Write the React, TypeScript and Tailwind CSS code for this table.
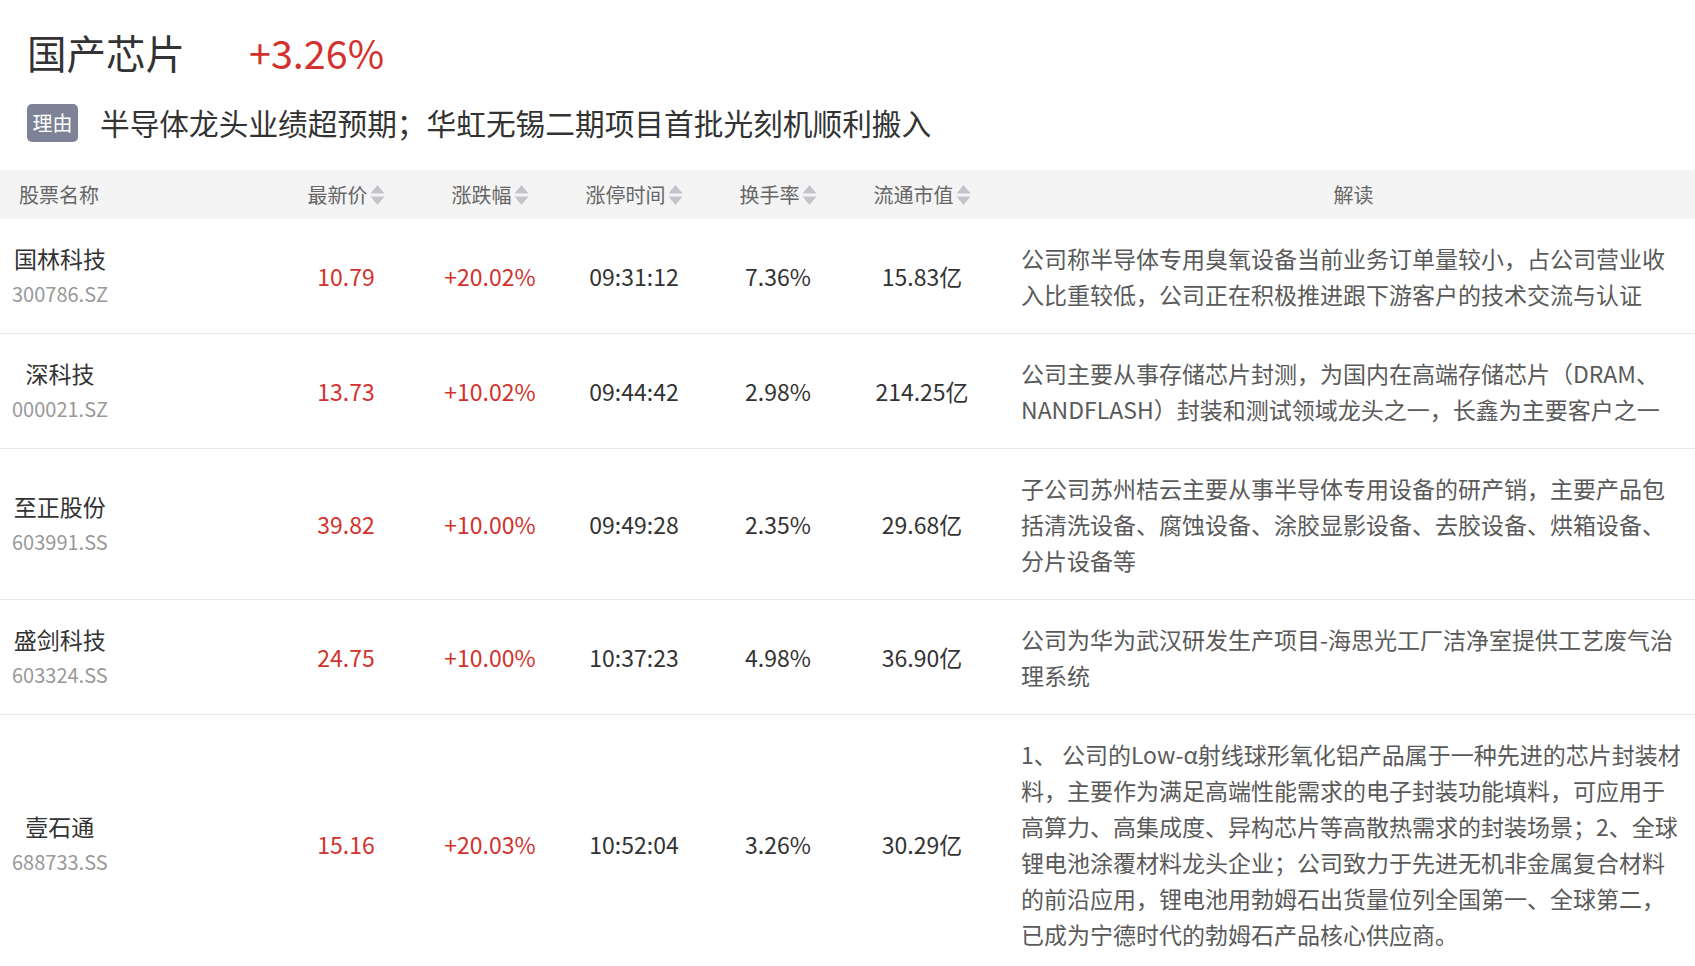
import React from "react";

type Stock = {
  name: string;
  code: string;
  price: string;
  change: string;
  time: string;
  turnover: string;
  cap: string;
  note: string;
};

const stocks: Stock[] = [
  {
    name: "国林科技",
    code: "300786.SZ",
    price: "10.79",
    change: "+20.02%",
    time: "09:31:12",
    turnover: "7.36%",
    cap: "15.83亿",
    note: "公司称半导体专用臭氧设备当前业务订单量较小，占公司营业收入比重较低，公司正在积极推进跟下游客户的技术交流与认证",
  },
  {
    name: "深科技",
    code: "000021.SZ",
    price: "13.73",
    change: "+10.02%",
    time: "09:44:42",
    turnover: "2.98%",
    cap: "214.25亿",
    note: "公司主要从事存储芯片封测，为国内在高端存储芯片（DRAM、NANDFLASH）封装和测试领域龙头之一，长鑫为主要客户之一",
  },
  {
    name: "至正股份",
    code: "603991.SS",
    price: "39.82",
    change: "+10.00%",
    time: "09:49:28",
    turnover: "2.35%",
    cap: "29.68亿",
    note: "子公司苏州桔云主要从事半导体专用设备的研产销，主要产品包括清洗设备、腐蚀设备、涂胶显影设备、去胶设备、烘箱设备、分片设备等",
  },
  {
    name: "盛剑科技",
    code: "603324.SS",
    price: "24.75",
    change: "+10.00%",
    time: "10:37:23",
    turnover: "4.98%",
    cap: "36.90亿",
    note: "公司为华为武汉研发生产项目-海思光工厂洁净室提供工艺废气治理系统",
  },
  {
    name: "壹石通",
    code: "688733.SS",
    price: "15.16",
    change: "+20.03%",
    time: "10:52:04",
    turnover: "3.26%",
    cap: "30.29亿",
    note: "1、 公司的Low-α射线球形氧化铝产品属于一种先进的芯片封装材料，主要作为满足高端性能需求的电子封装功能填料，可应用于高算力、高集成度、异构芯片等高散热需求的封装场景；2、全球锂电池涂覆材料龙头企业；公司致力于先进无机非金属复合材料的前沿应用，锂电池用勃姆石出货量位列全国第一、全球第二，已成为宁德时代的勃姆石产品核心供应商。",
  },
];

function SortArrows() {
  return (
    <svg width="15" height="22" viewBox="0 0 15 22" className="ml-[2px] shrink-0">
      <path d="M7.5 1 L14.5 9.5 L0.5 9.5 Z" fill="#c2c5cc" />
      <path d="M0.5 12.5 L14.5 12.5 L7.5 21 Z" fill="#c2c5cc" />
    </svg>
  );
}

function SortHeader({ label }: { label: string }) {
  return (
    <th className="font-normal">
      <span className="inline-flex items-center justify-center">
        {label}
        <SortArrows />
      </span>
    </th>
  );
}

export default function App() {
  return (
    <div
      className="min-h-screen w-full bg-white text-[#333]"
      style={{ fontFamily: '"Noto Sans CJK SC", "Noto Sans", sans-serif' }}
    >
      <div className="mt-[23px] flex h-[57px] items-center pl-[27px]">
        <span className="text-[39.5px] leading-none text-[#333]">国产芯片</span>
        <span className="ml-[64px] text-[39.5px] leading-none text-[#d2322d]">+3.26%</span>
      </div>

      <div className="mt-[24px] flex h-[38px] items-center pl-[27px]">
        <span className="flex h-[38px] w-[51px] items-center justify-center rounded-[5px] bg-[#7d8296] text-[20px] text-white">
          理由
        </span>
        <span className="ml-[22px] text-[29.7px] leading-none text-[#333]">
          半导体龙头业绩超预期；华虹无锡二期项目首批光刻机顺利搬入
        </span>
      </div>

      <table className="mt-[28px] w-full table-fixed border-collapse">
        <colgroup>
          <col className="w-[274px]" />
          <col className="w-[144px]" />
          <col className="w-[144px]" />
          <col className="w-[144px]" />
          <col className="w-[144px]" />
          <col className="w-[144px]" />
          <col />
        </colgroup>
        <thead>
          <tr className="h-[49px] bg-[#f4f4f4] text-[20px] text-[#666]">
            <th className="pl-[19px] text-left font-normal">股票名称</th>
            <SortHeader label="最新价" />
            <SortHeader label="涨跌幅" />
            <SortHeader label="涨停时间" />
            <SortHeader label="换手率" />
            <SortHeader label="流通市值" />
            <th className="pl-[18px] font-normal">解读</th>
          </tr>
        </thead>
        <tbody>
          {stocks.map((s) => (
            <tr key={s.code} className="border-b border-[#e8e8e8] text-[23px]">
              <td className="pl-[12px] align-middle">
                <div className="inline-block text-center">
                  <div className="leading-[36px] text-[#333]">{s.name}</div>
                  <div className="text-[20px] leading-[36px] text-[#999]">{s.code}</div>
                </div>
              </td>
              <td className="text-center align-middle text-[#d2322d]">{s.price}</td>
              <td className="text-center align-middle text-[#d2322d]">{s.change}</td>
              <td className="text-center align-middle text-[#333]">{s.time}</td>
              <td className="text-center align-middle text-[#333]">{s.turnover}</td>
              <td className="text-center align-middle text-[#333]">{s.cap}</td>
              <td className="py-[21px] pl-[27px] pr-[14px] align-middle leading-[36px] text-[#5a5a5a]">
                {s.note}
              </td>
            </tr>
          ))}
        </tbody>
      </table>
    </div>
  );
}
